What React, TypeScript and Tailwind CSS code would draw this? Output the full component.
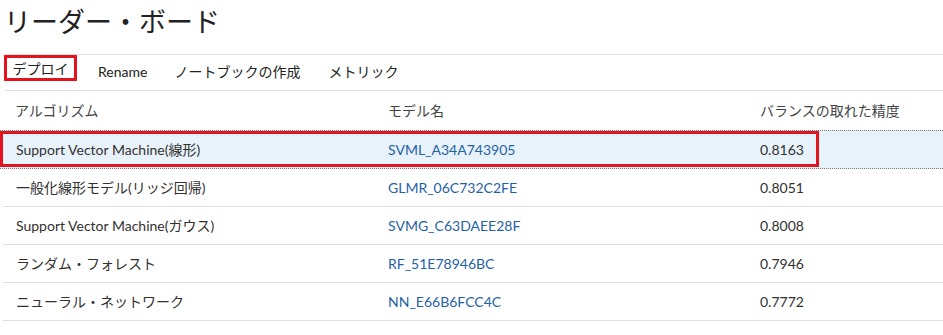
import React from "react";

const rows = [
  { algo: "Support Vector Machine(線形)", model: "SVML_A34A743905", score: "0.8163", selected: true },
  { algo: "一般化線形モデル(リッジ回帰)", model: "GLMR_06C732C2FE", score: "0.8051" },
  { algo: "Support Vector Machine(ガウス)", model: "SVMG_C63DAEE28F", score: "0.8008" },
  { algo: "ランダム・フォレスト", model: "RF_51E78946BC", score: "0.7946" },
  { algo: "ニューラル・ネットワーク", model: "NN_E66B6FCC4C", score: "0.7772" },
];

const font = { fontFamily: '"Segoe UI", Lato, "Noto Sans CJK JP", sans-serif' };

export default function App() {
  return (
    <div className="w-[943px] h-[335px] bg-white overflow-hidden text-[#323130]" style={font}>
      <div className="h-[54px] pl-[4px] pt-[3px] text-[27px] leading-[38px] text-[#222]">リーダー・ボード</div>
      <div className="ml-[5px] h-[37px] border-t border-b border-[#e0e0e0] flex items-start text-[14px]">
        <div className="h-[26px] w-[73px] -ml-[1px] border-[3px] border-[#e3141e] flex items-center justify-center text-[#222]">
          デプロイ
        </div>
        <div className="ml-[21px] mt-[6px] text-[#222]">Rename</div>
        <div className="ml-[27px] mt-[6px] text-[#222]">ノートブックの作成</div>
        <div className="ml-[28px] mt-[6px] text-[#222]">メトリック</div>
      </div>
      <div className="h-[39px] flex items-center text-[14px] text-[#444]">
        <div className="w-[388px] pl-[15px]">アルゴリズム</div>
        <div className="w-[372px]">モデル名</div>
        <div>バランスの取れた精度</div>
      </div>
      {rows.map((r) =>
        r.selected ? (
          <div key={r.model} className="relative h-[39px] border-y border-dotted border-[#777] bg-[#e8f2fa] flex items-center text-[14px]">
            <div className="absolute left-0 top-0 h-[36px] w-[819px] border-[3px] border-[#e3141e]" />
            <div className="w-[388px] pl-[16px]">{r.algo}</div>
            <div className="w-[372px] text-[#1f62a5]">{r.model}</div>
            <div>{r.score}</div>
          </div>
        ) : (
          <div key={r.model} className="h-[38px] border-b border-[#e0e0e0] flex items-center text-[14px] ml-[3px]">
            <div className="w-[385px] pl-[13px]">{r.algo}</div>
            <div className="w-[372px] text-[#1f62a5]">{r.model}</div>
            <div>{r.score}</div>
          </div>
        )
      )}
    </div>
  );
}
